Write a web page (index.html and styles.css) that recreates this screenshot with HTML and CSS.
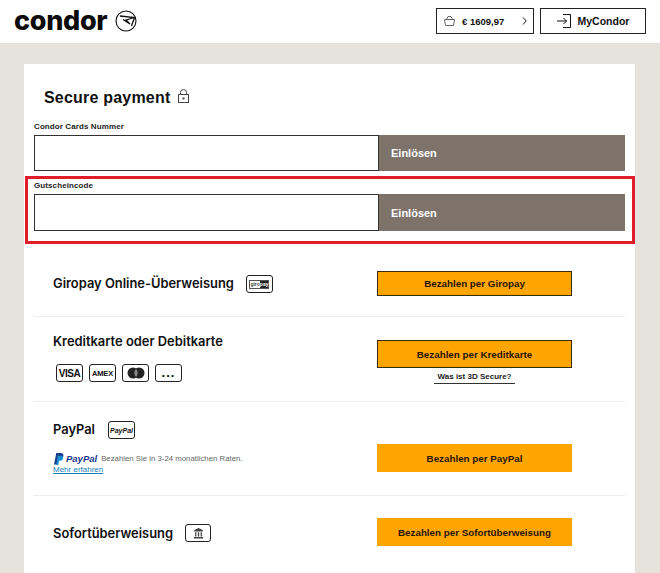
FILE: index.html
```html
<!DOCTYPE html>
<html lang="de">
<head>
    <meta charset="UTF-8">
    <meta name="viewport" content="width=device-width, initial-scale=1.0">
    <title>Condor - Secure payment</title>
    <link rel="stylesheet" href="styles.css">
</head>
<body>
    <header class="topbar">
        <div class="brand">
            <span class="brand-name">condor</span>
            <svg class="brand-mark" width="22" height="22" viewBox="0 0 22 22" fill="none" stroke="#111" stroke-width="1.1">
                <circle cx="11" cy="11" r="10"/>
                <path d="M5 6 L19.500 7.500 L16.500 16 M19.500 7.500 L11 10 L15 14 L8 9.500" stroke-width="1.300"/>
            </svg>
        </div>
        <div class="topbar-actions">
            <a class="top-btn top-btn-cart" href="#">
                <svg width="11" height="10" viewBox="0 0 11 10" fill="none" stroke="#666" stroke-width="1">
                    <path d="M.5 3.500 H10.500 L9.500 9.500 H1.500 Z"/>
                    <path d="M2.500 3.500 L4 .5 H7 L8.500 3.500"/>
                </svg>
                <span class="cart-sum">€ 1609,97</span>
                <svg width="5" height="8" viewBox="0 0 5 8" fill="none" stroke="#111" stroke-width="1">
                    <path d="M1 .5 L4.200 4 L1 7.500"/>
                </svg>
            </a>
            <a class="top-btn top-btn-login" href="#">
                <svg width="14" height="14" viewBox="0 0 14 14" fill="none" stroke="#111" stroke-width="1">
                    <path d="M6 .5 H13.500 V13.500 H6"/>
                    <path d="M0 7 H9.500 M6.500 4 L9.500 7 L6.500 10"/>
                </svg>
                <span>MyCondor</span>
            </a>
        </div>
    </header>

    <main class="card">
        <h1 class="title">
            Secure payment
            <svg width="11" height="14" viewBox="0 0 11 14" fill="none" stroke="#444" stroke-width="1">
                <rect x=".5" y="5.500" width="10" height="8"/>
                <path d="M2.500 5.500 V3.500 a3 3 0 0 1 6 0 V5.500"/>
                <rect x="4.500" y="8.500" width="2" height="2" fill="#444" stroke="none"/>
            </svg>
        </h1>

        <form class="voucher">
            <label class="voucher-label">Condor Cards Nummer</label>
            <div class="voucher-row">
                <input class="voucher-input" type="text">
                <button class="voucher-btn" type="button">Einlösen</button>
            </div>
        </form>

        <form class="voucher voucher-second">
            <label class="voucher-label">Gutscheincode</label>
            <div class="voucher-row">
                <input class="voucher-input" type="text">
                <button class="voucher-btn" type="button">Einlösen</button>
            </div>
            <div class="marker"></div>
        </form>

        <section class="pay pay-giropay">
            <div class="pay-info">
                <div class="pay-head pay-head-narrow">
                    <h2 class="pay-title">Giropay Online-Überweisung</h2>
                    <span class="badge badge-giro"><span class="giro-inner"><span class="giro-a">giro</span><span class="giro-b">pay</span></span></span>
                </div>
            </div>
            <div class="pay-action">
                <a class="pay-btn pay-btn-line" href="#">Bezahlen per Giropay</a>
            </div>
        </section>

        <section class="pay pay-card">
            <div class="pay-info">
                <h2 class="pay-title">Kreditkarte oder Debitkarte</h2>
                <div class="badges">
                    <span class="badge badge-visa">VISA</span>
                    <span class="badge badge-amex">AMEX</span>
                    <span class="badge">
                        <svg width="18" height="12" viewBox="0 0 18 12">
                            <circle cx="6" cy="6" r="5.500" fill="#222"/>
                            <circle cx="12" cy="6" r="5.500" fill="#222"/>
                            <path d="M9 2 a5.500 5.500 0 0 1 0 8 a5.500 5.500 0 0 1 0 -8" fill="#888"/>
                        </svg>
                    </span>
                    <span class="badge badge-more">...</span>
                </div>
            </div>
            <div class="pay-action">
                <a class="pay-btn pay-btn-line pay-btn-tall" href="#">Bezahlen per Kreditkarte</a>
                <a class="secure-link" href="#">Was ist 3D Secure?</a>
            </div>
        </section>

        <section class="pay pay-paypal">
            <div class="pay-info">
                <div class="pay-head">
                    <h2 class="pay-title">PayPal</h2>
                    <span class="badge badge-pp">PayPal</span>
                </div>
                <div class="pp-note">
                    <svg width="10" height="12" viewBox="0 0 11 13">
                        <path d="M2.500 0 H7 C10 0 11 2 10 4.500 C9 7 7 7.500 5 7.500 L4 12.500 H0 Z" fill="#1a3a8c"/>
                        <path d="M4 3 H8.500 C11 4 10.500 8 7 8.500 H5.500 L4.800 13 H2.500 Z" fill="#1c8fd0"/>
                    </svg>
                    <span class="pp-word">PayPal</span>
                    <span>Bezahlen Sie in 3-24 monatlichen Raten.</span>
                </div>
                <a class="pp-more" href="#">Mehr erfahren</a>
            </div>
            <div class="pay-action">
                <a class="pay-btn pay-btn-tall" href="#">Bezahlen per PayPal</a>
            </div>
        </section>

        <section class="pay pay-sofort">
            <div class="pay-info">
                <div class="pay-head pay-head-narrow pay-head-sofort">
                    <h2 class="pay-title">Sofortüberweisung</h2>
                    <span class="badge badge-bank">
                        <svg width="11" height="11" viewBox="0 0 13 13" fill="#444">
                            <path d="M6.500 0 L11.500 2.500 V4 H1.500 V2.500 Z"/>
                            <path d="M2.500 5 H4 V10 H2.500 Z M5.700 5 H7.300 V10 H5.700 Z M9 5 H10.500 V10 H9 Z"/>
                            <path d="M1 10.500 H12 V12.500 H1 Z"/>
                        </svg>
                    </span>
                </div>
            </div>
            <div class="pay-action">
                <a class="pay-btn pay-btn-tall" href="#">Bezahlen per Sofortüberweisung</a>
            </div>
        </section>
    </main>
</body>
</html>
```

FILE: styles.css
```css
html, body {
    height: 573px;
    overflow: hidden;
}

body {
    margin: 0;
    background-color: #e6e3dc;
    font-family: "Liberation Sans", Arial, sans-serif;
    color: #111111;
}

a {
    color: inherit;
    text-decoration: none;
}

.topbar {
    height: 43px;
    background-color: #ffffff;
    display: flex;
    justify-content: space-between;
    align-items: center;
    padding: 0 14px 0 14px;
}

.brand {
    display: flex;
    align-items: center;
    gap: 8px;
}

.brand-name {
    font-family: "Inter", sans-serif;
    font-size: 27px;
    font-weight: 800;
    letter-spacing: -0.3px;
    color: #0a0a0a;
    line-height: 1;
    position: relative;
    top: -1px;
}

.brand-mark {
    position: relative;
    top: -1px;
}

.topbar-actions {
    display: flex;
    gap: 6px;
    margin-top: -1px;
}

.top-btn {
    box-sizing: border-box;
    height: 26px;
    border: 1px solid #222222;
    display: flex;
    align-items: center;
    font-weight: bold;
}

.top-btn-cart {
    width: 98px;
    padding: 0 6px 0 7px;
    font-size: 9.500px;
}

.cart-sum {
    flex: 1;
    margin-left: 7px;
}

.top-btn-login {
    width: 106px;
    justify-content: center;
    gap: 7px;
    font-size: 10.500px;
}

.card {
    background-color: #ffffff;
    margin: 21px 25px 0 24px;
    padding: 0 10px;
    height: 520px;
}

.title {
    margin: 0;
    padding: 25px 0 0 10px;
    height: 30px;
    font-size: 16px;
    line-height: 17px;
    letter-spacing: 0.2px;
    font-weight: bold;
    display: flex;
    align-items: flex-start;
    gap: 8px;
}

.voucher {
    margin-top: 3px;
    position: relative;
}

.voucher-second {
    margin-top: 10px;
}

.voucher-second .voucher-row {
    height: 37px;
}

.voucher-label {
    display: block;
    font-size: 8px;
    line-height: 9px;
    height: 13px;
    font-weight: bold;
    letter-spacing: 0.1px;
    color: #222222;
}

.voucher-row {
    display: flex;
    height: 36px;
}

.voucher-input {
    width: 345px;
    box-sizing: border-box;
    border: 1px solid #333333;
    background-color: #ffffff;
    margin: 0;
    padding: 0 8px;
}

.voucher-btn {
    flex: 1;
    border: 0;
    margin: 0;
    padding: 0 0 0 12px;
    background-color: #7d736b;
    color: #ffffff;
    font-family: inherit;
    font-size: 11px;
    font-weight: bold;
    text-align: left;
}

.marker {
    position: absolute;
    left: -9px;
    right: -10px;
    top: -5px;
    bottom: -13px;
    border: 3px solid #e01b2a;
    pointer-events: none;
}

.pay {
    display: flex;
    justify-content: space-between;
    border-bottom: 1px solid #eeeeee;
    box-sizing: border-box;
}

.pay-info {
    padding-left: 19px;
}

.pay-action {
    width: 195px;
    margin-right: 53px;
    display: flex;
    flex-direction: column;
    align-items: center;
}

.pay-giropay {
    height: 86px;
    padding-top: 40px;
}

.pay-card {
    height: 85px;
    padding-top: 16px;
}

.pay-paypal {
    height: 94px;
    padding-top: 15px;
}

.pay-sofort {
    height: 80px;
    border-bottom: 0;
    padding-top: 22px;
}

.pay-head {
    display: flex;
    align-items: center;
    gap: 13px;
    height: 26px;
}

.pay-head-narrow {
    gap: 12px;
}

.pay-head-sofort {
    height: 30px;
}

.pay-title {
    margin: 0;
    font-family: "Inter", sans-serif;
    font-size: 12.900px;
    line-height: 16px;
    font-weight: 600;
    color: #111111;
}

.pay-head-sofort .pay-title {
    margin-top: 1px;
}

.badge {
    box-sizing: border-box;
    width: 27px;
    height: 18px;
    border: 1.300px solid #222222;
    border-radius: 3px;
    display: inline-flex;
    align-items: center;
    justify-content: center;
    background-color: #ffffff;
    overflow: hidden;
}

.badge-bank {
    width: 26px;
}

.badges {
    display: flex;
    gap: 6px;
    margin: 14px 0 0 3px;
}

.pay-card .pay-title {
    margin-top: 1px;
}

.giro-inner {
    display: flex;
    width: 20px;
    height: 9px;
    border: 1px solid #555555;
    box-sizing: border-box;
    font-size: 5px;
    font-weight: bold;
    line-height: 7px;
}

.giro-a {
    flex: 1;
    text-align: center;
    color: #444444;
}

.giro-b {
    flex: 1;
    text-align: center;
    background-color: #222222;
    color: #ffffff;
}

.badge-visa {
    font-size: 10px;
    font-weight: bold;
    letter-spacing: -0.4px;
}

.badge-amex {
    font-size: 7.500px;
    font-weight: bold;
    letter-spacing: -0.2px;
}

.badge-more {
    font-size: 13px;
    font-weight: bold;
    line-height: 10px;
    letter-spacing: 1px;
    align-items: flex-end;
    padding-bottom: 3px;
}

.badge-pp {
    font-size: 7px;
    font-weight: bold;
    font-style: italic;
}

.pp-note {
    display: flex;
    align-items: center;
    margin-top: 9px;
    font-size: 7.800px;
    color: #666666;
    height: 13px;
}

.pp-note svg {
    margin: 0 2px 0 1px;
}

.pp-word {
    font-size: 9.500px;
    font-weight: bold;
    font-style: italic;
    color: #1a3a8c;
    margin-right: 4px;
}

.pp-more {
    display: block;
    font-size: 8px;
    line-height: 10px;
    color: #1a7fb5;
    text-decoration: underline;
}

.pay-btn {
    box-sizing: border-box;
    width: 195px;
    height: 25px;
    background-color: #ffa500;
    display: flex;
    align-items: center;
    justify-content: center;
    font-size: 9.800px;
    font-weight: bold;
    color: #2a1400;
}

.pay-btn-line {
    border: 1px solid #3a2a10;
}

.pay-btn-tall {
    height: 28px;
}

.pay-card .pay-action {
    padding-top: 7px;
}

.pay-paypal .pay-action {
    padding-top: 27px;
}

.pay-sofort .pay-action {
    padding-top: 0;
}

.secure-link {
    margin-top: 4px;
    padding: 0 4px 1px;
    border-bottom: 1px solid #333333;
    font-size: 8px;
    line-height: 10px;
    font-weight: bold;
    color: #222222;
}
```
